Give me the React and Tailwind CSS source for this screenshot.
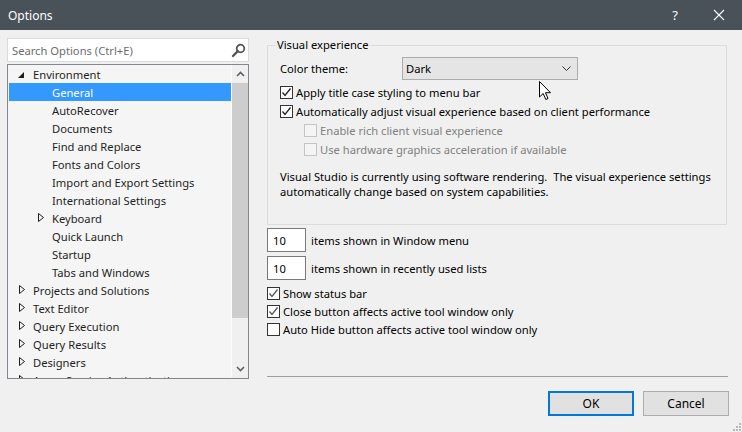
import React from 'react';

const tree = [
  { label: 'Environment', level: 0, arrow: 'open' },
  { label: 'General', level: 1, selected: true },
  { label: 'AutoRecover', level: 1 },
  { label: 'Documents', level: 1 },
  { label: 'Find and Replace', level: 1 },
  { label: 'Fonts and Colors', level: 1 },
  { label: 'Import and Export Settings', level: 1 },
  { label: 'International Settings', level: 1 },
  { label: 'Keyboard', level: 1, arrow: 'closed' },
  { label: 'Quick Launch', level: 1 },
  { label: 'Startup', level: 1 },
  { label: 'Tabs and Windows', level: 1 },
  { label: 'Projects and Solutions', level: 0, arrow: 'closed' },
  { label: 'Text Editor', level: 0, arrow: 'closed' },
  { label: 'Query Execution', level: 0, arrow: 'closed' },
  { label: 'Query Results', level: 0, arrow: 'closed' },
  { label: 'Designers', level: 0, arrow: 'closed' },
  { label: 'Azure Service Authentication', level: 0, arrow: 'closed' },
];

const TreeArrow = ({ type }) => {
  if (type === 'open') {
    return (
      <svg width="8" height="8" viewBox="0 0 8 8" className="mt-[1px]">
        <path d="M7 1 L7 7 L1 7 Z" fill="#1e1e1e" />
      </svg>
    );
  }
  if (type === 'closed') {
    return (
      <svg width="8" height="10" viewBox="0 0 8 10" className="ml-[2px]">
        <path d="M0.5 0.5 L5.5 4.5 L0.5 8.5 Z" fill="none" stroke="#1e1e1e" strokeWidth="1" />
      </svg>
    );
  }
  return null;
};

const TreeRow = ({ item }) => (
  <div
    className={
      'ml-[1px] flex h-[18px] shrink-0 items-center whitespace-nowrap ' +
      (item.level === 0 ? 'pl-[8px] ' : 'pl-[27px] ') +
      (item.selected ? 'bg-[#3399ff] text-white' : 'text-[#1e1e1e]')
    }
  >
    <span className="flex w-[16px] items-center">
      <TreeArrow type={item.arrow} />
    </span>
    <span>{item.label}</span>
  </div>
);

const Chevron = ({ up }) => (
  <svg width="9" height="6" viewBox="0 0 9 6">
    <path
      d={up ? 'M1 5 L4.5 1.5 L8 5' : 'M1 1 L4.5 4.5 L8 1'}
      fill="none"
      stroke="#606060"
      strokeWidth="1.6"
    />
  </svg>
);

const Check = ({ checked, disabled, light }) => (
  <span
    className={
      'flex h-[13px] w-[13px] shrink-0 items-center justify-center border ' +
      (disabled ? 'border-[#c4c4c4] bg-[#f4f4f4]' : 'border-[#333333] bg-white')
    }
  >
    {checked && (
      <svg width="11" height="11" viewBox="0 0 11 11">
        <path
          d="M1.5 5.5 L4 8.5 L9.5 1.5"
          fill="none"
          stroke={light ? '#555555' : '#222222'}
          strokeWidth="1.3"
        />
      </svg>
    )}
  </span>
);

const CheckRow = ({ label, checked, disabled, light, className = '' }) => (
  <div className={'flex items-center gap-[3px] whitespace-nowrap ' + className}>
    <Check checked={checked} disabled={disabled} light={light} />
    <span className={disabled ? 'text-[#808080]' : 'text-black'}>{label}</span>
  </div>
);

const NumberRow = ({ value, label, className = '' }) => (
  <div className={'flex items-center gap-[5px] ' + className}>
    <div className="flex h-[24px] w-[39px] items-center border border-[#7a7a7a] bg-white pl-[5px] text-black">
      {value}
    </div>
    <span className="text-black">{label}</span>
  </div>
);

export default function App() {
  return (
    <div className="relative flex h-[432px] w-[742px] flex-col overflow-hidden bg-[#f0f0f0] font-['Noto_Sans',sans-serif] text-[11.2px] leading-[15px]">
      {/* title bar */}
      <div className="flex h-[30px] shrink-0 items-center bg-[#4a5259] pl-[8px] text-white">
        <span className="text-[12px]">Options</span>
        <div className="ml-auto flex h-full items-center">
          <span className="w-[40px] text-center text-[13px]">?</span>
          <span className="flex w-[47px] items-center justify-center">
            <svg width="12" height="12" viewBox="0 0 12 12">
              <path d="M1 1 L11 11 M11 1 L1 11" stroke="white" strokeWidth="1.1" />
            </svg>
          </span>
        </div>
      </div>

      <div className="flex flex-1">
        {/* left column */}
        <div className="flex w-[249px] shrink-0 flex-col pl-[7px] pt-[8px]">
          <div className="flex h-[24px] items-center border border-[#d9dbe0] bg-white pl-[4px] pr-[2px]">
            <span className="flex-1 text-[#6d6d6d]">Search Options (Ctrl+E)</span>
            <svg width="15" height="15" viewBox="0 0 15 15">
              <circle cx="9.5" cy="5.5" r="3.8" fill="none" stroke="#555555" strokeWidth="1.8" />
              <path d="M6.8 8.2 L2 13" stroke="#555555" strokeWidth="2.4" strokeLinecap="round" />
            </svg>
          </div>
          <div className="mt-[2px] flex h-[315px] border border-[#828790] bg-[#f5f5f5]">
            <div className="flex flex-1 flex-col overflow-hidden">
              {tree.map((item) => (
                <TreeRow key={item.label} item={item} />
              ))}
            </div>
            <div className="flex w-[17px] shrink-0 flex-col border-l border-[#fafafa] bg-[#f0f0f0]">
              <div className="flex h-[18px] items-center justify-center">
                <Chevron up />
              </div>
              <div className="h-[235px] bg-[#cdcdcd]" />
              <div className="flex-1" />
              <div className="flex h-[18px] items-center justify-center">
                <Chevron />
              </div>
            </div>
          </div>
        </div>

        {/* right column */}
        <div className="ml-[18px] flex w-[463px] flex-col">
          <fieldset className="mt-[7px] h-[188px] w-[460px] border border-[#dcdcdc] px-[12px]">
            <legend className="-ml-[4px] px-[1px] leading-[16px] text-black">Visual experience</legend>
            <div className="mt-[4px] flex items-center">
              <span className="w-[122px] text-black">Color theme:</span>
              <div className="flex h-[23px] w-[176px] items-center border border-[#acacac] bg-[#e5e5e5] pl-[3px] pr-[6px] text-black">
                <span className="flex-1">Dark</span>
                <svg width="9" height="6" viewBox="0 0 9 6">
                  <path d="M0.5 0.5 L4.5 4.5 L8.5 0.5" fill="none" stroke="#333333" strokeWidth="1" />
                </svg>
              </div>
            </div>
            <CheckRow className="mt-[3px] h-[19px]" checked label="Apply title case styling to menu bar" />
            <CheckRow
              className="h-[19px]"
              checked
              label="Automatically adjust visual experience based on client performance"
            />
            <CheckRow className="h-[19px] pl-[24px]" disabled label="Enable rich client visual experience" />
            <CheckRow
              className="h-[19px] pl-[24px]"
              disabled
              label="Use hardware graphics acceleration if available"
            />
            <p className="mt-[10px] whitespace-pre text-black">
              {'Visual Studio is currently using software rendering.  The visual experience settings\nautomatically change based on system capabilities.'}
            </p>
          </fieldset>

          <NumberRow className="mt-[3px]" value="10" label="items shown in Window menu" />
          <NumberRow className="mt-[4px]" value="10" label="items shown in recently used lists" />

          <CheckRow className="mt-[4px] h-[18px]" checked light label="Show status bar" />
          <CheckRow className="h-[18px]" checked light label="Close button affects active tool window only" />
          <CheckRow className="h-[19px]" label="Auto Hide button affects active tool window only" />

          <div className="mt-[37px] h-px w-[461px] bg-[#a0a0a0]" />

          <div className="mt-[14px] flex w-[463px] justify-end gap-[9px] pr-[1px]">
            <button className="h-[25px] w-[86px] border-2 border-[#0078d7] bg-[#e1e1e1] text-[12px] text-black">
              OK
            </button>
            <button className="h-[25px] w-[86px] border border-[#adadad] bg-[#e1e1e1] text-[12px] text-black">
              Cancel
            </button>
          </div>
        </div>
      </div>

      {/* mouse pointer */}
      <svg
        className="absolute left-[539px] top-[81px]"
        width="13"
        height="20"
        viewBox="0 0 13 20"
      >
        <path
          d="M0.5 0.5 L0.5 16 L4.2 12.5 L6.8 18.5 L9 17.5 L6.5 11.7 L11.5 11.7 Z"
          fill="white"
          stroke="black"
          strokeWidth="1"
          strokeLinejoin="round"
        />
      </svg>

      {/* size grip */}
      <svg className="absolute bottom-[1px] right-[1px]" width="9" height="9" viewBox="0 0 9 9">
        <rect x="7" y="1" width="2" height="2" fill="#b8b8b8" />
        <rect x="4" y="4" width="2" height="2" fill="#b8b8b8" />
        <rect x="7" y="4" width="2" height="2" fill="#b8b8b8" />
        <rect x="1" y="7" width="2" height="2" fill="#b8b8b8" />
        <rect x="4" y="7" width="2" height="2" fill="#b8b8b8" />
        <rect x="7" y="7" width="2" height="2" fill="#b8b8b8" />
      </svg>
    </div>
  );
}
